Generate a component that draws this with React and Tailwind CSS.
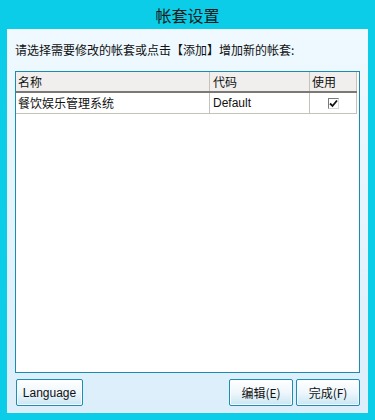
import React from 'react'

const cjk = { fontFamily: '"Noto Sans CJK SC", "Liberation Sans", sans-serif' }
const latin = { fontFamily: '"Liberation Sans", "Noto Sans CJK SC", sans-serif' }

function Btn({ children, className = '' }) {
	return (
		<button
			className={
				'h-[27px] rounded-[2px] border border-[#1a8fb4] bg-gradient-to-b from-[#ffffff] via-[#eef7fc] to-[#c9e6f3] text-[12px] text-[#111] shadow-[inset_0_0_0_1px_#ffffff] ' +
				className
			}
			style={cjk}
		>
			{children}
		</button>
	)
}

export default function App() {
	const accounts = [{ name: '餐饮娱乐管理系统', code: 'Default', used: true }]

	return (
		<div className="w-[375px] h-[420px] bg-[#0bcde7] flex flex-col overflow-hidden">
			{/* title */}
			<div className="h-[29px] flex items-center justify-center text-[16px] text-[#1b1b1b]" style={cjk}>
				帐套设置
			</div>

			<div className="flex-1 mx-[7px] mb-[7px] bg-gradient-to-b from-[#eff9ff] to-[#dbeefa] px-[8px] flex flex-col">
				<p className="pt-[13px] h-[42px] text-[12px] text-[#111] leading-[16px]" style={cjk}>
					请选择需要修改的帐套或点击【添加】增加新的帐套:
				</p>

				{/* table */}
				<div className="h-[302px] border border-[#1b8cb1] bg-white pr-[2px]">
					<div className="flex h-[21px] bg-[#f0efed] border-b-2 border-[#7b7876] text-[12px] text-[#111]" style={cjk}>
						<div className="w-[194px] border-r border-[#c5c2bb] pl-[2px] leading-[19px]">名称</div>
						<div className="w-[100px] border-r border-[#c5c2bb] pl-[3px] leading-[19px]">代码</div>
						<div className="flex-1 border-r border-[#c5c2bb] pl-[2px] leading-[19px]">使用</div>
					</div>
					{accounts.map((a) => (
						<div key={a.code} className="flex h-[21px] border-b border-[#c5c2bb] text-[12px] text-[#111]">
							<div className="w-[194px] border-r border-[#c5c2bb] pl-[2px] leading-[20px]" style={cjk}>
								{a.name}
							</div>
							<div className="w-[100px] border-r border-[#c5c2bb] pl-[3px] leading-[20px]" style={latin}>
								{a.code}
							</div>
							<div className="flex-1 border-r border-[#c5c2bb] flex items-center justify-center">
								<span className="w-[11px] h-[11px] border border-[#7a7a7a] border-r-[#d8d8d8] border-b-[#d8d8d8] bg-white flex items-center justify-center">
									{a.used && (
										<svg width="9" height="9" viewBox="0 0 9 9">
											<path d="M1 4.5 L3.5 7 L8 1.5" stroke="#111" strokeWidth="1.8" fill="none" />
										</svg>
									)}
								</span>
							</div>
						</div>
					))}
				</div>

				{/* buttons */}
				<div className="flex mt-[6px] gap-[3px]">
					<Btn className="w-[67px] ml-[1px]">
						<span style={latin}>Language</span>
					</Btn>
					<div className="flex-1" />
					<Btn className="w-[64px]">编辑(E)</Btn>
					<Btn className="w-[64px]">完成(F)</Btn>
				</div>
			</div>
		</div>
	)
}
